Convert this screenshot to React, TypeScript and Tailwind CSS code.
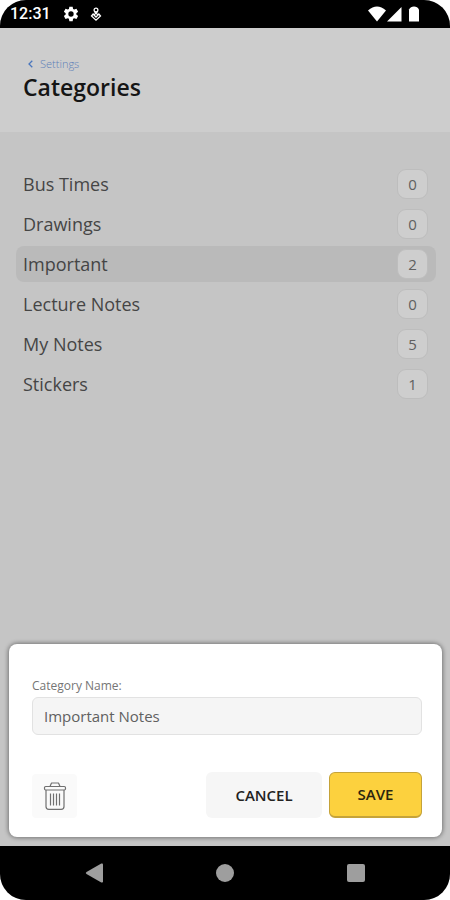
import { useState } from "react";

interface Category {
  name: string;
  count: number;
}

const categories: Category[] = [
  { name: "Bus Times", count: 0 },
  { name: "Drawings", count: 0 },
  { name: "Important", count: 2 },
  { name: "Lecture Notes", count: 0 },
  { name: "My Notes", count: 5 },
  { name: "Stickers", count: 1 },
];

function StatusBar() {
  return (
    <div className="flex h-7 items-center justify-between bg-black pr-[31px] pl-[10px] text-white">
      <div className="flex items-center">
        <span className="w-[53px] font-['Roboto',sans-serif] text-base leading-7 font-medium">12:31</span>
        <svg className="h-4 w-4" viewBox="0 0 24 24" fill="currentColor">
          <path
            fillRule="evenodd"
            d="M9.5 1h5l.6 3.4 1.8 1 3.3-1.2 2.5 4.3-2.7 2.2v2.2l2.7 2.2-2.5 4.4-3.3-1.2-1.8 1-.6 3.7h-5l-.6-3.7-1.8-1-3.3 1.2-2.5-4.4L4 12.900v-2.200L1.300 8.500l2.500-4.300 3.300 1.200 1.800-1zM12 8a4 4 0 1 0 0 8 4 4 0 0 0 0-8z"
          />
        </svg>
        <svg className="ml-[11px] h-4 w-3" viewBox="0 0 12 16" fill="none" stroke="currentColor" strokeWidth="1.3">
          <circle cx="6" cy="4" r="1.900" />
          <path d="M4.700 5.700 8 9 6 11 4 9 7.300 5.700M3.600 7.500 1.500 10 6 14.200 10.500 10 8.400 7.500" />
        </svg>
      </div>
      <svg className="h-4 w-[51px]" viewBox="0 0 51 16" fill="currentColor">
        <path d="M0 4.500Q9 -3.500 18 4.500L9 15.500z" />
        <path d="M19 15.500 33.500 1V15.500z" />
        <path d="M41 3.500Q42.500 .500 46 .500T51 3.500V15.500H41z" />
      </svg>
    </div>
  );
}

function TrashIcon() {
  return (
    <svg className="h-7 w-6" viewBox="0 0 24 28" fill="none" stroke="#707070" strokeWidth="1.2" strokeLinejoin="round">
      <path d="M7 4.500 8.500 1h7L17 4.500" />
      <rect x="1.500" y="4.500" width="21" height="3.500" rx="1.200" />
      <path d="M3 8V24.500Q3 27.300 5.800 27.300H18.200Q21 27.300 21 24.500V8" />
      <path d="M7.500 11.500V23.500M10.500 11.500V23.500M13.500 11.500V23.500M16.500 11.500V23.500" />
    </svg>
  );
}

function NavBar() {
  return (
    <div className="grid h-[54px] grid-cols-[1fr_70px_1fr] items-center bg-black px-[85px] text-[#9e9e9e]">
      <button aria-label="Back" className="justify-self-start">
        <svg className="h-5 w-[18px]" viewBox="0 0 18 20" fill="currentColor">
          <path d="M1.500 9 16.300.600Q18 0 18 1.500V18.500Q18 20 16.300 19.400L1.500 11Q0 10 1.500 9z" />
        </svg>
      </button>
      <button aria-label="Home" className="h-[18px] w-[18px] justify-self-center rounded-full bg-[#9e9e9e]" />
      <button aria-label="Recent apps" className="h-[18px] w-[18px] justify-self-end rounded-xs bg-[#9e9e9e]" />
    </div>
  );
}

export default function App() {
  const [selected, setSelected] = useState("Important");
  const [name, setName] = useState("Important Notes");

  return (
    <div className="min-h-screen bg-white font-['Open_Sans','Noto_Sans',sans-serif]">
      <div className="flex min-h-screen flex-col overflow-hidden rounded-[26px] bg-[#c5c5c5]">
        <StatusBar />

        <header className="h-[104px] bg-[#cdcdcd] px-[23px] pt-7">
          <a href="#settings" className="flex items-center gap-[7px] pl-[5px] text-[11px] leading-4 font-light text-[#5d7fb8]">
            <svg className="h-2 w-[5px]" viewBox="0 0 5 8" fill="none" stroke="#4a76bd" strokeWidth="1.3">
              <path d="M4.300.700 1 4l3.300 3.300" />
            </svg>
            Settings
          </a>
          <h1 className="text-[23px] leading-[30px] font-semibold text-[#151515]">Categories</h1>
        </header>

        {/* Category list */}
        <ul className="flex flex-col gap-1 pt-[34px] pr-[14px] pb-6 pl-4">
          {categories.map((c) => (
            <li key={c.name}>
              <button
                onClick={() => {
                  setSelected(c.name);
                  setName(c.name);
                }}
                className={`flex h-9 w-full items-center justify-between rounded-lg pr-2 pl-[7px] text-left ${
                  selected === c.name ? "bg-[#bababa]" : ""
                }`}
              >
                <span className="text-lg leading-6 text-[#454545]">{c.name}</span>
                <span className="flex h-[30px] w-[31px] items-center justify-center rounded-[9px] border border-[#bdbdbd] bg-[#cecece] text-[15px] text-[#606060]">
                  {c.count}
                </span>
              </button>
            </li>
          ))}
        </ul>

        {/* Edit sheet */}
        <form
          onSubmit={(e) => e.preventDefault()}
          className="mt-auto mr-2 mb-[9px] ml-[9px] rounded-lg bg-white pt-[34px] pr-5 pb-[19px] pl-[23px] shadow-[0_0_4px_1px_rgba(0,0,0,0.4)]"
        >
          <label htmlFor="category" className="block text-xs leading-4 text-[#757575]">
            Category Name:
          </label>
          <input
            id="category"
            value={name}
            onChange={(e) => setName(e.target.value)}
            className="mt-[3px] h-[38px] w-full rounded-md border border-[#e2e2e2] bg-[#f5f5f5] px-[11px] text-[15px] text-[#606060] outline-none"
          />
          <div className="mt-[37px] flex items-end">
            <button type="button" aria-label="Delete" className="flex h-11 w-[45px] items-center justify-center rounded-sm bg-[#fafafa]">
              <TrashIcon />
            </button>
            <button type="button" className="ml-auto h-[46px] w-[116px] rounded-md bg-[#f6f6f6] text-[15px] font-semibold text-[#222222]">
              CANCEL
            </button>
            <button
              type="submit"
              className="ml-[7px] h-[46px] w-[93px] rounded-md border border-b-2 border-[#c5a33a] bg-[#fcd13e] text-[15px] font-semibold text-[#2b250f]"
            >
              SAVE
            </button>
          </div>
        </form>

        <NavBar />
      </div>
    </div>
  );
}
